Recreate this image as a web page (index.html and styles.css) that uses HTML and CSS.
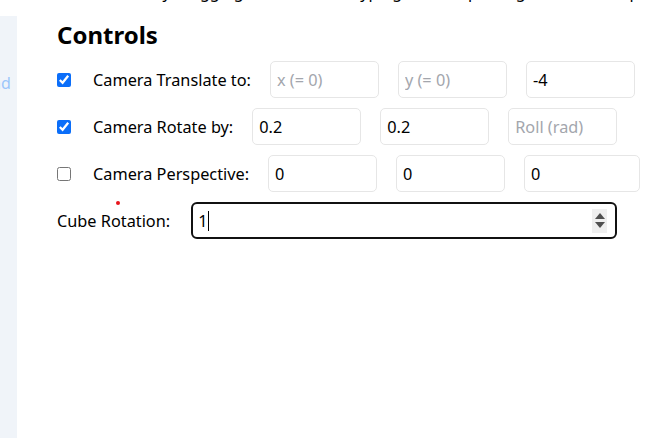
FILE: index.html
```html
<!DOCTYPE html>
<html>
<head>
<meta charset="utf-8">
<link rel="stylesheet" href="styles.css">
</head>
<body>
<div class="page">
  <aside class="sidebar"><a class="side-link" href="#">Read</a></aside>
  <main class="main">
    <p class="intro">the camera, try dragging the sliders, or typing a value, pinning a number, or perhaps setting the perspective depth.</p>
    <h2 class="title">Controls</h2>
    <div class="row">
      <input type="checkbox" class="check" checked>
      <span class="label">Camera Translate to:</span>
      <input class="field" type="text" placeholder="x (= 0)">
      <input class="field" type="text" placeholder="y (= 0)">
      <input class="field" type="text" value="-4">
    </div>
    <div class="row">
      <input type="checkbox" class="check" checked>
      <span class="label">Camera Rotate by:</span>
      <input class="field" type="text" value="0.2">
      <input class="field" type="text" value="0.2">
      <input class="field" type="text" placeholder="Roll (rad)">
    </div>
    <div class="row">
      <input type="checkbox" class="check">
      <span class="label">Camera Perspective:</span>
      <input class="field" type="text" value="0">
      <input class="field" type="text" value="0">
      <input class="field field-wide" type="text" value="0">
    </div>
    <div class="row row-cube">
      <span class="label label-cube">Cube Rotation:<span class="dot"></span></span>
      <div class="number-box">
        <span class="number-value">1</span><span class="caret"></span>
        <span class="spinner"><span class="tri-up"></span><span class="tri-down"></span></span>
      </div>
    </div>
  </main>
</div>
</body>
</html>
```
FILE: styles.css
```css
html, body {
  margin: 0;
  padding: 0;
  background: #ffffff;
}
body {
  font-family: "Noto Sans", "Open Sans", sans-serif;
  color: #000;
  overflow: hidden;
  height: 438px;
}
.page {
  display: flex;
  height: 438px;
}
.sidebar {
  width: 17px;
  margin-top: 16px;
  background: #f0f4f9;
  overflow: hidden;
  flex: none;
}
.side-link {
  display: block;
  margin-top: 56px;
  margin-left: -27px;
  font-size: 16px;
  color: #9cc6fb;
  text-decoration: none;
  white-space: nowrap;
}
.main {
  padding-left: 40px;
  flex: 1;
  overflow: hidden;
}
.intro {
  margin: -19px 0 0 0;
  font-size: 16px;
  line-height: 22px;
  white-space: nowrap;
  padding-left: 0;
}
.title {
  font-size: 24px;
  font-weight: 700;
  margin: 0;
  line-height: 32px;
  margin-top: 16px;
  margin-bottom: 10px;
}
.row {
  display: flex;
  align-items: center;
  gap: 19px;
  height: 37px;
  margin-bottom: 10px;
}
.check {
  width: 14px;
  height: 14px;
  margin: 0 3px 0 0;
  accent-color: #0b6ef9;
}
.label {
  font-size: 16.3px;
  white-space: nowrap;
}
.label-cube {
  position: relative;
}
.dot {
  position: absolute;
  left: 59px;
  top: -9px;
  width: 4px;
  height: 4px;
  border-radius: 50%;
  background: #e8141b;
}
.field {
  box-sizing: border-box;
  width: 109px;
  height: 37px;
  border: 1px solid #e6e6e6;
  border-radius: 5px;
  padding: 0 6px;
  font-family: inherit;
  font-size: 16.3px;
  color: #000;
  background: #fff;
  outline: none;
}
.field::placeholder {
  color: #a3a6ad;
}
.field-wide {
  width: 116px;
}
.row-cube {
  gap: 21px;
}
.number-box {
  box-sizing: border-box;
  width: 426px;
  height: 37px;
  border: 2px solid #111;
  border-radius: 6px;
  display: flex;
  align-items: center;
  padding-left: 5px;
  font-size: 16.3px;
  position: relative;
}
.caret {
  display: inline-block;
  width: 1px;
  height: 20px;
  background: #000;
  margin-left: 1px;
}
.spinner {
  margin-left: auto;
  margin-right: 8px;
  width: 15px;
  height: 24px;
  background: #efefef;
  display: flex;
  flex-direction: column;
  align-items: center;
  justify-content: center;
  gap: 3px;
}
.tri-up {
  width: 0;
  height: 0;
  border-left: 5px solid transparent;
  border-right: 5px solid transparent;
  border-bottom: 6px solid #505050;
}
.tri-down {
  width: 0;
  height: 0;
  border-left: 5px solid transparent;
  border-right: 5px solid transparent;
  border-top: 6px solid #505050;
}
```
